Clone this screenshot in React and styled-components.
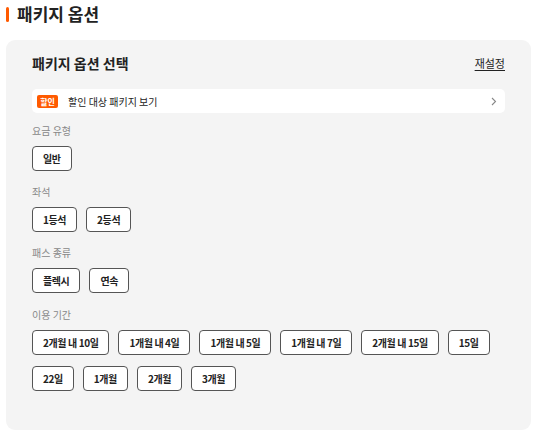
import React from "react";
import styled, { createGlobalStyle } from "styled-components";

const Global = createGlobalStyle`
  body {
    margin: 0;
    background: #ffffff;
    font-family: "Noto Sans CJK KR", "Noto Sans", sans-serif;
    color: #222;
  }
`;

const Page = styled.div`
  padding: 3px 8px 8px 6px;
`;

const Title = styled.h2`
  display: flex;
  align-items: center;
  gap: 8px;
  margin: 0 0 15px 0;
  font-size: 17px;
  line-height: 22px;
  font-weight: 700;
  color: #222;
`;

const Mark = styled.span`
  width: 3px;
  height: 15px;
  border-radius: 2px;
  background: #ff5a00;
`;

const Panel = styled.section`
  background: #f4f4f4;
  border-radius: 9px;
  padding: 13px 26px 39px 26px;
`;

const Head = styled.div`
  display: flex;
  justify-content: space-between;
  align-items: center;
  height: 20px;
  margin-bottom: 16px;
`;

const SubTitle = styled.h3`
  margin: 0;
  font-size: 14px;
  font-weight: 700;
  color: #222;
`;

const Reset = styled.a`
  font-size: 11px;
  color: #222;
  text-decoration: underline;
  text-underline-offset: 2px;
`;

const Promo = styled.div`
  display: flex;
  align-items: center;
  height: 24px;
  padding: 0 8px 0 5px;
  background: #fff;
  border-radius: 5px;
  font-size: 10px;
  color: #222;
`;

const Badge = styled.span`
  display: inline-flex;
  align-items: center;
  justify-content: center;
  width: 21px;
  height: 13px;
  margin-right: 10px;
  border-radius: 2px;
  background: #ff5a00;
  color: #fff;
  font-size: 8px;
  font-weight: 700;
`;

const Grow = styled.span`
  flex: 1;
`;

const Group = styled.div`
  margin-top: ${(p) => p.$top}px;
`;

const Label = styled.div`
  font-size: 10px;
  line-height: 14px;
  color: #888;
  margin-bottom: 8px;
`;

const Chips = styled.div`
  display: flex;
  flex-wrap: wrap;
  column-gap: 9px;
  row-gap: 11px;
`;

const Chip = styled.button`
  height: 25px;
  padding: 0 10px;
  background: #fff;
  border: 1px solid #555;
  border-radius: 4px;
  font-family: "Noto Sans CJK KR", "Noto Sans", sans-serif;
  font-size: 10px;
  font-weight: 700;
  color: #222;
  letter-spacing: -0.4px;
`;

const groups = [
  { label: "요금 유형", items: ["일반"], top: 11 },
  { label: "좌석", items: ["1등석", "2등석"], top: 14 },
  { label: "패스 종류", items: ["플렉시", "연속"], top: 14 },
  {
    label: "이용 기간",
    items: ["2개월 내 10일", "1개월 내 4일", "1개월 내 5일", "1개월 내 7일", "2개월 내 15일", "15일", "22일", "1개월", "2개월", "3개월"],
    top: 15,
  },
];

export default function App() {
  return (
    <Page>
      <Global />
      <Title>
        <Mark />
        패키지 옵션
      </Title>
      <Panel>
        <Head>
          <SubTitle>패키지 옵션 선택</SubTitle>
          <Reset>재설정</Reset>
        </Head>
        <Promo>
          <Badge>할인</Badge>
          <Grow>할인 대상 패키지 보기</Grow>
          <svg width="6" height="9" viewBox="0 0 6 9" fill="none">
            <path d="M1 1l3.5 3.5L1 8" stroke="#888" strokeWidth="1.1" />
          </svg>
        </Promo>
        {groups.map((g) => (
          <Group key={g.label} $top={g.top}>
            <Label>{g.label}</Label>
            <Chips>
              {g.items.map((i) => (
                <Chip key={i}>{i}</Chip>
              ))}
            </Chips>
          </Group>
        ))}
      </Panel>
    </Page>
  );
}
